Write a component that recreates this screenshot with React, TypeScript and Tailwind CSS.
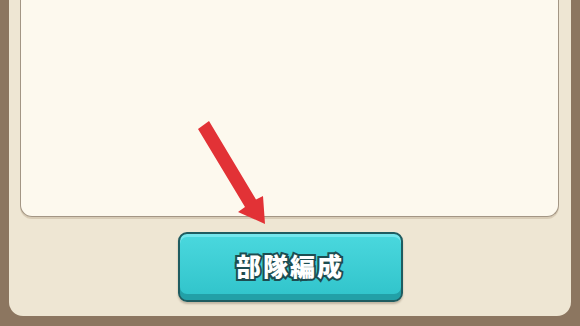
export default function App() {
    return (
        <div className="relative w-[580px] h-[326px] bg-[#8c7660] px-[9px] pb-[10px] overflow-hidden">
            {/* Outer beige panel */}
            <div className="h-full bg-[#eee6d3] rounded-b-[14px] flex flex-col items-center">
                {/* Cream content area */}
                <div className="self-stretch ml-[11px] mr-[12px] h-[217px] bg-[#fdf9ee] border-x-[1.5px] border-b-[1.5px] border-[#a39684] rounded-b-[12px] shadow-[0_2px_0_#d8ccb6]" />

                {/* Button */}
                <button className="mt-[15px] w-[225px] h-[70px] rounded-[9px] border-2 border-[#1f5c60] bg-gradient-to-b from-[#4ad8de] to-[#2fc3ca] shadow-[inset_0_3px_0_#74e6ec,inset_0_-6px_0_#22a0a7,0_2px_2px_rgba(60,40,20,0.25)] flex items-center justify-center pb-[3px]">
                    <span className="font-['Noto_Sans_CJK_JP',sans-serif] font-black text-[25px] tracking-[2px] text-white [-webkit-text-stroke:4px_#1d4d51] [paint-order:stroke_fill]">
                        部隊編成
                    </span>
                </button>
            </div>

            {/* Red arrow */}
            <svg className="absolute left-0 top-0" width="580" height="326" viewBox="0 0 580 326">
                <polygon
                    points="198,129 209,121 256,199.5 263,196 265,224 238,212 245,207"
                    fill="#e23236"
                />
            </svg>
        </div>
    );
}
